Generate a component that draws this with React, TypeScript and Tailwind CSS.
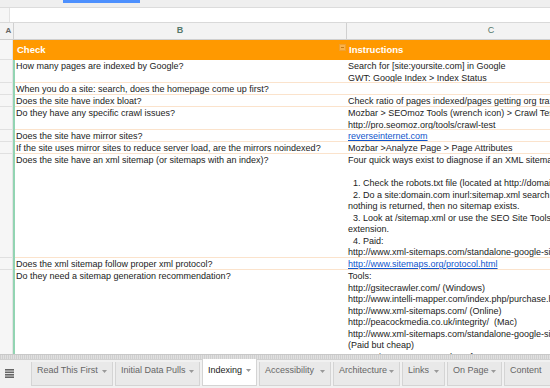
import React from "react";

const font = { fontFamily: '"Liberation Sans", Arial, sans-serif' };

type Line = { t: string; link?: boolean };
type Row = { h: number; b: string; c: Line[] };

const rows: Row[] = [
  {
    h: 23,
    b: "How many pages are indexed by Google?",
    c: [{ t: "Search for [site:yoursite.com] in Google" }, { t: "GWT: Google Index > Index Status" }],
  },
  { h: 12, b: "When you do a site: search, does the homepage come up first?", c: [] },
  { h: 12, b: "Does the site have index bloat?", c: [{ t: "Check ratio of pages indexed/pages getting org traffic" }] },
  {
    h: 23,
    b: "Do they have any specific crawl issues?",
    c: [{ t: "Mozbar > SEOmoz Tools (wrench icon) > Crawl Test" }, { t: "http://pro.seomoz.org/tools/crawl-test" }],
  },
  { h: 12, b: "Does the site have mirror sites?", c: [{ t: "reverseinternet.com", link: true }] },
  {
    h: 12,
    b: "If the site uses mirror sites to reduce server load, are the mirrors noindexed?",
    c: [{ t: "Mozbar >Analyze Page > Page Attributes" }],
  },
  {
    h: 104,
    b: "Does the site have an xml sitemap (or sitemaps with an index)?",
    c: [
      { t: "Four quick ways exist to diagnose if an XML sitemap exists:" },
      { t: "\u00a0" },
      { t: "\u00a0\u00a01. Check the robots.txt file (located at http://domain.com/robots.txt)" },
      { t: "\u00a0\u00a02. Do a site:domain.com inurl:sitemap.xml search in Google. If" },
      { t: "nothing is returned, then no sitemap exists." },
      { t: "\u00a0\u00a03. Look at /sitemap.xml or use the SEO Site Tools Chrome" },
      { t: "extension." },
      { t: "\u00a0\u00a04. Paid:" },
      { t: "http://www.xml-sitemaps.com/standalone-google-sitemap-generator.html" },
    ],
  },
  {
    h: 12,
    b: "Does the xml sitemap follow proper xml protocol?",
    c: [{ t: "http://www.sitemaps.org/protocol.html", link: true }],
  },
  {
    h: 100,
    b: "Do they need a sitemap generation recommendation?",
    c: [
      { t: "Tools:" },
      { t: "http://gsitecrawler.com/ (Windows)" },
      { t: "http://www.intelli-mapper.com/index.php/purchase.html" },
      { t: "http://www.xml-sitemaps.com/ (Online)" },
      { t: "http://peacockmedia.co.uk/integrity/\u00a0\u00a0(Mac)" },
      { t: "http://www.xml-sitemaps.com/standalone-google-sitemap-generator.html" },
      { t: "(Paid but cheap)" },
      { t: "Screaming Frog: Screenshot of steps -" },
    ],
  },
];

const tabs = [
  { name: "Read This First", w: 82 },
  { name: "Initial Data Pulls", w: 85 },
  { name: "Indexing", w: 55, active: true },
  { name: "Accessibility", w: 72 },
  { name: "Architecture", w: 67 },
  { name: "Links", w: 43 },
  { name: "On Page", w: 55 },
  { name: "Content", w: 58 },
];

export default function App() {
  return (
    <div className="w-[550px] h-[388px] overflow-hidden bg-white flex flex-col text-[#222]" style={font}>
      {/* top toolbar remnant */}
      <div className="h-[8px] shrink-0 bg-[#efefef] border-b border-[#dcdcdc] flex">
        <div className="ml-[63px] w-[77px] h-[3px] bg-[#4d90fe]" />
      </div>
      {/* formula bar */}
      <div className="h-[15px] shrink-0 flex border-b border-[#d9d9d9]">
        <div className="w-[10px] bg-[#f6f6f6] border-r border-[#e2e2e2]" />
        <div className="flex-1 bg-white" />
      </div>
      {/* column headers */}
      <div className="h-[17px] shrink-0 flex bg-[#f3f3f3] border-b border-[#cfcfcf] text-[9px] text-[#55786a]">
        <div className="w-[14px] shrink-0 border-r border-[#d0d0d0] flex items-center justify-center font-bold text-[#666] text-[8px]">
          <span className="ml-[4px]">A</span>
        </div>
        <div className="w-[333px] shrink-0 border-r border-[#d0d0d0] flex items-center justify-center font-bold">
          B
        </div>
        <div className="flex-1 flex items-center justify-center pl-[85px]">C</div>
      </div>
      {/* body */}
      <div className="h-[314px] shrink-0 overflow-hidden flex">
        <div className="w-[13px] shrink-0 bg-[#f6f6f6] border-r border-[#e3e3e3] flex flex-col">
          <div className="h-[20px] shrink-0 border-b border-[#e0e0e0]" />
          {rows.map((r, i) => (
            <div key={i} className="shrink-0 border-b border-[#e0e0e0]" style={{ height: r.h }} />
          ))}
        </div>
        <div className="flex-1 flex flex-col min-w-0">
          {/* orange header */}
          <div className="h-[20px] shrink-0 bg-[#ff9900] flex text-white font-bold text-[9.5px] pl-[1px]">
            <div className="w-[333px] shrink-0 flex items-center justify-between pl-[3px] pr-[1px]">
              <span>Check</span>
              <span className="w-[7px] h-[7px] mb-[5px] bg-[#fbb24a] border border-[#f0a030] flex items-center justify-center">
                <span className="w-[3px] h-[1px] bg-[#c77a10]" />
              </span>
            </div>
            <div className="flex-1 flex items-center pl-[2px]">Instructions</div>
          </div>
          <div className="flex flex-1 min-h-0">
            <div className="w-[2px] shrink-0 bg-[#92d4b2]" />
            <div className="flex-1 flex flex-col min-w-0">
              {rows.map((r, i) => (
                <div
                  key={i}
                  className="shrink-0 flex border-b border-[#fbe3cc] text-[9px] leading-[11.5px] pt-[1px]"
                  style={{ height: r.h }}
                >
                  <div className="w-[332px] shrink-0 pl-[1px] whitespace-nowrap">{r.b}</div>
                  <div className="flex-1 min-w-0 pl-[1px] overflow-hidden bg-white">
                    {r.c.map((l, j) => (
                      <div
                        key={j}
                        className={
                          "whitespace-nowrap " + (l.link ? "text-[#1155cc] underline" : "")
                        }
                      >
                        {l.t}
                      </div>
                    ))}
                  </div>
                </div>
              ))}
            </div>
          </div>
        </div>
      </div>
      {/* horizontal scrollbar */}
      <div className="h-[5px] shrink-0 border-t border-[#c8c8c8] bg-[repeating-linear-gradient(90deg,#cfcfcf_0px,#cfcfcf_1px,#e0e0e0_1px,#e0e0e0_2px)]" />
      {/* sheet tabs */}
      <div className="h-[29px] shrink-0 bg-[#f1f1f1] border-t border-[#d0d0d0] flex items-start">
        <div className="w-[31px] shrink-0 h-full flex items-center pl-[5px] pb-[2px]">
          <svg width="9" height="9" viewBox="0 0 9 9">
            <rect x="0" y="0" width="9" height="1.6" fill="#666" />
            <rect x="0" y="2.5" width="9" height="1.6" fill="#666" />
            <rect x="0" y="5" width="9" height="1.6" fill="#666" />
            <rect x="0" y="7.4" width="9" height="1.6" fill="#666" />
          </svg>
        </div>
        <div className="flex gap-[2px]">
          {tabs.map((t) => (
            <div
              key={t.name}
              className={
                "shrink-0 flex items-center justify-between pl-[5px] pr-[5px] text-[9px] border-x border-b " +
                (t.active
                  ? "bg-white border-[#d4d4d4] text-[#222] h-[27px] -mt-[1px] pb-[3px]"
                  : "bg-[#e9e9e9] border-[#d4d4d4] text-[#666] h-[24px] mt-[2px] pb-[5px]")
              }
              style={{ width: t.w }}
            >
              <span className="whitespace-nowrap">{t.name}</span>
              <svg width="5" height="3" viewBox="0 0 5 3" className="shrink-0">
                <path d="M0 0 L5 0 L2.5 3 Z" fill="#999" />
              </svg>
            </div>
          ))}
        </div>
      </div>
    </div>
  );
}
